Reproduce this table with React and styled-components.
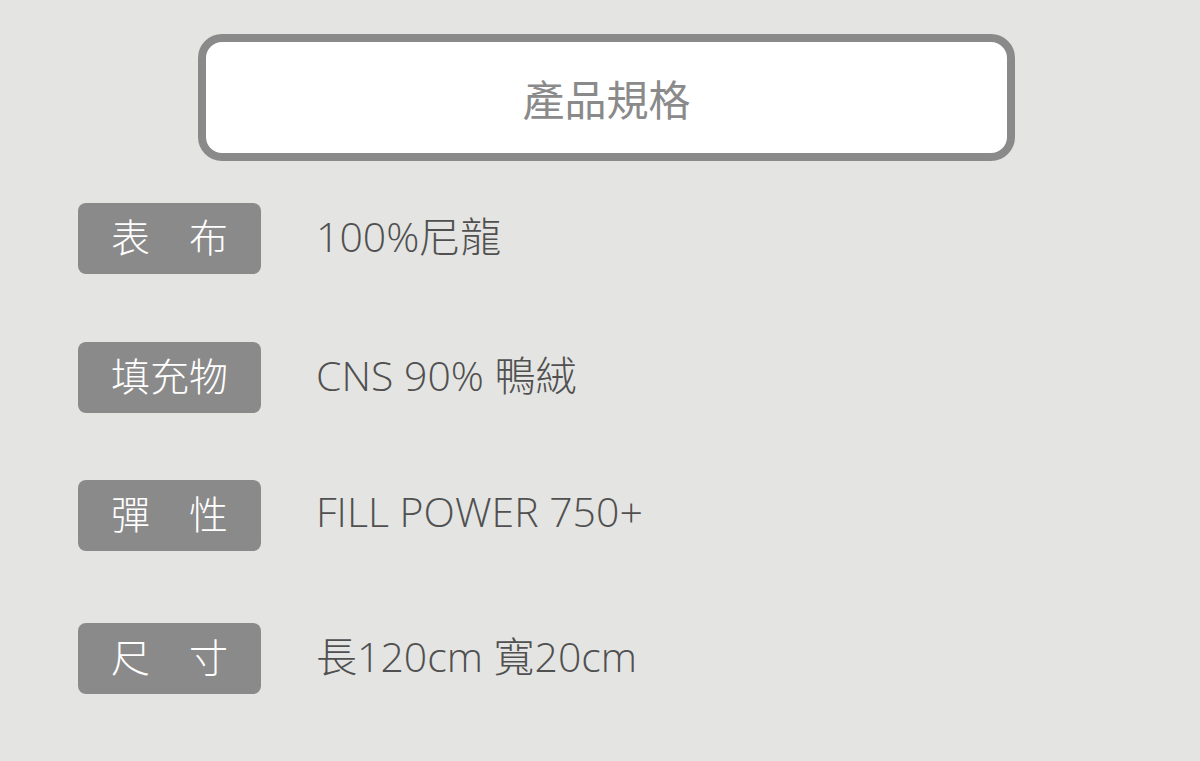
import React from "react";
import styled, { createGlobalStyle } from "styled-components";

const Global = createGlobalStyle`
  html, body { margin: 0; padding: 0; background: #e4e4e2; }
  body { font-family: "Noto Sans", "Noto Sans CJK TC", sans-serif; }
`;

const Page = styled.div`
  width: 1200px;
  height: 761px;
  background: #e4e4e2;
  padding: 34px 0 0 0;
  box-sizing: border-box;
  display: flex;
  flex-direction: column;
`;

const TitleBox = styled.div`
  margin-left: 198px;
  width: 817px;
  height: 127px;
  box-sizing: border-box;
  border: 8px solid #8b8a8a;
  border-radius: 24px;
  background: #ffffff;
  display: flex;
  align-items: center;
  justify-content: center;
`;

const Title = styled.h1`
  margin: 0;
  font-family: "Noto Sans CJK TC", "Noto Sans", sans-serif;
  font-weight: 400;
  font-size: 42px;
  color: #8a8a8a;
  line-height: 1;
`;

const List = styled.div`
  margin-top: 42px;
  padding-left: 78px;
  display: flex;
  flex-direction: column;
`;

const Row = styled.div`
  display: flex;
  align-items: center;
  margin-top: ${(p) => p.$top || 0}px;
`;

const Label = styled.div`
  width: 183px;
  height: 71px;
  box-sizing: border-box;
  padding-bottom: 7px;
  border-radius: 8px;
  background: #8b8a8a;
  color: #ffffff;
  display: flex;
  align-items: center;
  justify-content: center;
  font-family: "Noto Sans CJK TC", sans-serif;
  font-size: 39px;
  font-weight: 300;
  white-space: pre;
`;

const Value = styled.div`
  margin-left: 55px;
  padding-bottom: 10px;
  color: #505050;
  font-family: "Open Sans", "Noto Sans CJK TC", sans-serif;
  font-size: 41px;
  font-weight: 300;
  white-space: pre;
`;

const rows = [
  { label: "表　布", value: "100%尼龍", top: 0 },
  { label: "填充物", value: "CNS 90% 鴨絨", top: 68 },
  { label: "彈　性", value: "FILL POWER 750+", top: 67 },
  { label: "尺　寸", value: "長120cm 寬20cm", top: 72 },
];

export default function App() {
  return (
    <>
      <Global />
      <Page>
        <TitleBox>
          <Title>產品規格</Title>
        </TitleBox>
        <List>
          {rows.map((r) => (
            <Row key={r.label} $top={r.top}>
              <Label>{r.label}</Label>
              <Value>{r.value}</Value>
            </Row>
          ))}
        </List>
      </Page>
    </>
  );
}
